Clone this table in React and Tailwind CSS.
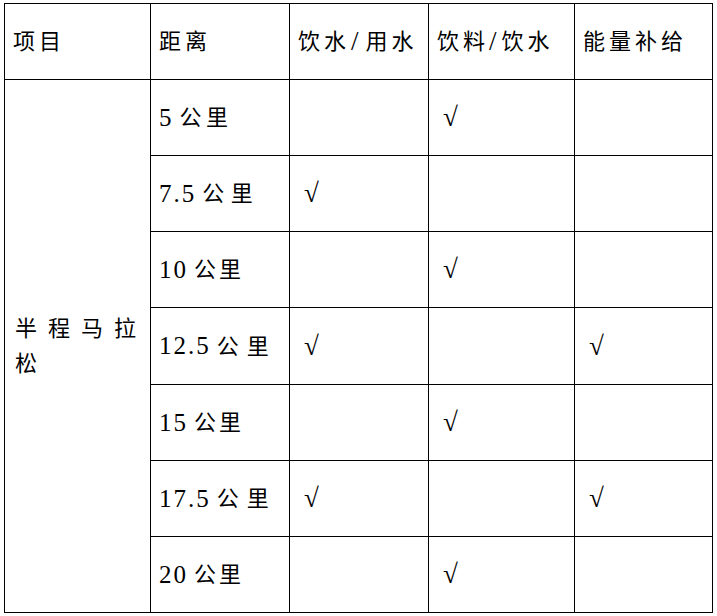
import React from "react";

const rows = [
  { num: "5", gap: "tracking-[4.5px]", checks: [false, true, false] },
  { num: "7.5", gap: "tracking-[6.5px]", checks: [true, false, false] },
  { num: "10", gap: "tracking-[3px]", checks: [false, true, false] },
  { num: "12.5", gap: "tracking-[8px]", checks: [true, false, true] },
  { num: "15", gap: "tracking-[3px]", checks: [false, true, false] },
  { num: "17.5", gap: "tracking-[8px]", checks: [true, false, true] },
  { num: "20", gap: "tracking-[3px]", checks: [false, true, false] },
];

function Head({ children }) {
  return (
    <div className="bg-white flex items-center pl-2 text-[22px] tracking-[4px] whitespace-nowrap">
      {children}
    </div>
  );
}

export default function App() {
  return (
    <div className="bg-white w-[717px] h-[616px] pt-[3px] pl-[4px] text-black font-['Liberation_Serif','Noto_Sans_CJK_SC',serif]">
      <div className="inline-grid bg-black p-px gap-px grid-cols-[145px_138px_138px_145px_137px] grid-rows-[75px_75px_75px_75px_76px_75px_75px_75px]">
        {/* header */}
        <Head>项目</Head>
        <Head>距离</Head>
        <Head>
          饮水<span className="text-[27px] leading-none ml-[1px] mr-[3px]">/</span>用水
        </Head>
        <Head>
          饮料<span className="text-[27px] leading-none mr-[1px]">/</span>饮水
        </Head>
        <Head>能量补给</Head>

        {/* event name spans all rows */}
        <div className="bg-white row-span-7 flex items-center px-2.5">
          <p className="w-full text-justify text-[22px] tracking-[4px] leading-[35px]">
            半程马拉松
          </p>
        </div>

        {rows.map((r, i) => (
          <React.Fragment key={i}>
            <div className="bg-white flex items-center pl-2 whitespace-nowrap">
              <span className="text-[25px] tracking-[2px]">{r.num}</span>
              <span className={"ml-[6px] text-[22px] " + r.gap}>公里</span>
            </div>
            {r.checks.map((c, j) => (
              <div key={j} className="bg-white flex items-center pl-[14px] text-[27px] leading-none">
                {c ? "√" : ""}
              </div>
            ))}
          </React.Fragment>
        ))}
      </div>
    </div>
  );
}
